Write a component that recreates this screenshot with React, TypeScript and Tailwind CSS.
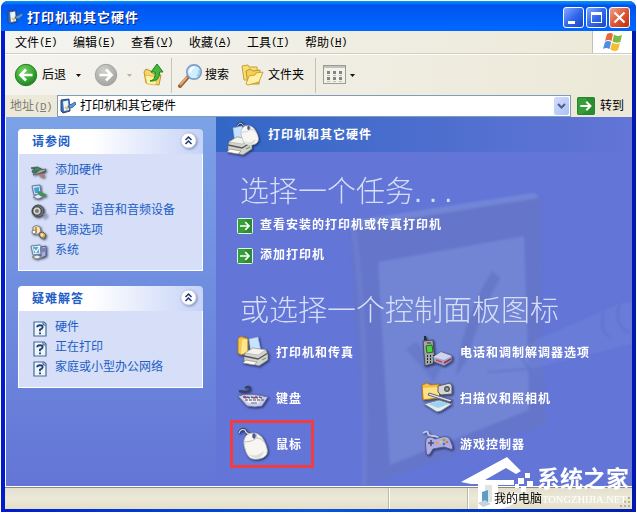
import React from 'react';

const UI = "font-['Liberation_Sans','Noto_Sans_CJK_SC',sans-serif]";

const Shadow = ({ children, w = 32, h = 32, box = '0 0 32 32' }: { children: React.ReactNode; w?: number; h?: number; box?: string }) => (
  <svg width={w} height={h} viewBox={box} className="shrink-0 overflow-visible drop-shadow-[1px_1px_1px_rgba(10,20,60,0.7)]">
    {children}
  </svg>
);

const WindowDoc = ({ size }: { size: number }) => (
  <svg width={size} height={size} viewBox="0 0 16 16" className="shrink-0">
    <path d="M1 2 L9 1 L10 13 L3 15 L1 13Z" fill="#3d6db5" stroke="#24467d" />
    <path d="M3 3.5 L8 2.5 L9 12 L4 13Z" fill="#e9f4fc" />
    <path d="M5 9 L7 11 L8.5 7" fill="none" stroke="#e1b35c" strokeWidth="1.3" />
    <path d="M8 9 Q9 6 12 6 L15 4 L16 6 L13 9 Q11 11 8 9Z" fill="#5a9ad5" stroke="#24558c" strokeWidth=".8" />
  </svg>
);

const Flag = () => (
  <svg width="20" height="20" viewBox="0 0 20 20">
    <path d="M4 2 Q7 0 10 2 L8.5 9 Q5.5 7 2 9Z" fill="#e9653a" />
    <path d="M11 2.5 Q14 5 19 3 L17.3 10 Q13 11.5 9.5 9.5Z" fill="#7dbb42" />
    <path d="M2 10 Q5 8 8.2 10 L6.5 17 Q3 15 0 17Z" fill="#4f8fe0" />
    <path d="M9.2 10.5 Q13 13 17 11 L15 18 Q11 20 7.3 17.5Z" fill="#f6bd32" />
  </svg>
);

const Round = ({ gray = false }: { gray?: boolean }) => (
  <svg width="24" height="24" viewBox="0 0 24 24" className="shrink-0">
    <defs>
      <radialGradient id={gray ? 'rg' : 'gg'} cx=".4" cy=".3" r=".75">
        <stop offset="0" stopColor={gray ? '#d0d0cd' : '#79d267'} />
        <stop offset=".55" stopColor={gray ? '#b6b6b3' : '#3dac34'} />
        <stop offset="1" stopColor={gray ? '#a0a09c' : '#1b7d1d'} />
      </radialGradient>
    </defs>
    <circle cx="12" cy="12" r="10.7" fill={gray ? 'url(#rg)' : 'url(#gg)'} stroke={gray ? '#a4a4a0' : '#268226'} />
    <path d={gray ? 'M5.5 12 H17 M12 6.5 L17.5 12 L12 17.5' : 'M18.5 12 H7 M12 6.5 L6.5 12 L12 17.5'} fill="none" stroke="#fff" strokeWidth="2.7" />
  </svg>
);

const GreenArrow = ({ size }: { size: number }) => (
  <svg width={size} height={size} viewBox="0 0 16 16" className="shrink-0">
    <rect x=".5" y=".5" width="15" height="15" rx="1" fill="#35a039" stroke={size > 16 ? '#288332' : '#e5f1e4'} />
    <path d="M8 1h7v14H4Q13 12 8 1Z" fill="#207f2a" opacity=".55" />
    <path d="M3 8h9M8.3 4.2 12 8l-3.7 3.8" fill="none" stroke="#fff" strokeWidth="1.7" />
  </svg>
);

const UpFolder = () => (
  <svg width="21" height="24" viewBox="0 0 21 24">
    <path d="M1 9 L3 6 L8 8 L9 10 L18 12 L16 22 L3 20Z" fill="#f6d667" stroke="#bd932d" />
    <path d="M2 12 L14 14 L13 22 L4 21Z" fill="#fff2a2" stroke="#d2aa45" strokeWidth=".7" />
    <path d="M7 18 Q13 17 12 9 L8 9 L14 1 L20 9 L16.5 9 Q17 19 7 18Z" fill="#45b83c" stroke="#20801f" />
  </svg>
);

const Search = () => (
  <svg width="25" height="25" viewBox="0 0 25 25">
    <path d="M2 23 L10 14" stroke="#9a6335" strokeWidth="4" strokeLinecap="round" />
    <path d="M2 22 L9 14" stroke="#e0aa78" strokeWidth="2" />
    <circle cx="16" cy="9" r="7.2" fill="#cfeeff" stroke="#7d9ec9" strokeWidth="1.7" />
    <path d="M11 9 Q12 3 18 4 Q14 5 13 10Z" fill="#fff" />
    <path d="M19 13 Q22 11 21 7" stroke="#95cff4" strokeWidth="2" fill="none" />
  </svg>
);

const Folders = () => (
  <svg width="23" height="22" viewBox="0 0 23 22">
    <path d="M1 2 L7 1 L8 3 L16 3 L17 16 L3 16Z" fill="#f8dd72" stroke="#c6a03b" />
    <path d="M5 7 L9 5 L12 7 L19 6 L18 20 L7 20Z" fill="#f4cf55" stroke="#bd9331" />
    <path d="M5 20 L8 12 L14 11 L15 9 L22 8 L18 18 L7 21Z" fill="#fff19f" stroke="#c9a33d" />
  </svg>
);

const Views = () => (
  <svg width="24" height="20" viewBox="0 0 24 20">
    <rect x=".5" y=".5" width="22" height="18" fill="#f3f2ea" stroke="#9b9b95" />
    <path d="M1 2 H22" stroke="#c2c2bc" strokeWidth="2" />
    {[4, 10, 16].map((x) => [6, 12].map((y) => (
      <g key={`${x}-${y}`}>
        <rect x={x} y={y} width="3" height="3" fill="#85857f" />
        <rect x={x} y={y + 4} width="3" height="1" fill="#bdbdb7" />
      </g>
    )))}
  </svg>
);

const Caret = ({ faded = false }: { faded?: boolean }) => (
  <svg width="5" height="3" viewBox="0 0 5 3" className="shrink-0"><path d="M0 0h5L2.5 3Z" fill={faded ? '#b4b3a9' : '#111'} /></svg>
);

const MouseShape = () => (
  <>
    <path d="M2 5 Q4 0 8 2 Q9 6 14 6" fill="none" stroke="#32425c" strokeWidth="2.6" />
    <path d="M2 5 Q4 0 8 2 Q9 6 14 6" fill="none" stroke="#dde2ea" strokeWidth="1.1" />
    <path d="M7 12 Q9 4 18 5 Q25 6 29 17 Q34 29 22 31 Q12 33 9 24 Q6 17 7 12Z" fill="#f7f6f1" stroke="#a9abb0" strokeWidth=".8" />
    <path d="M8 14 Q15 14 20 10 L19 5 M20 10 Q24 10 27 14" fill="none" stroke="#c0c3ca" />
    <path d="M12 25 Q17 31 27 23 Q25 31 18 30 Q13 29 12 25Z" fill="#dedcd7" />
    <ellipse cx="17" cy="8" rx="1.8" ry="2.8" fill="#4e5790" />
  </>
);

const Printer = () => (
  <>
    <path d="M12 3 L21 1 L24 15 L14 18Z" fill="#c8e3ff" stroke="#91b1d8" strokeWidth=".7" />
    <path d="M8 17 L16 12 L29 14 L31 18 V24 L22 30 L7 26 V20Z" fill="#d4d2cc" stroke="#777a80" strokeWidth=".8" />
    <path d="M8 17 L16 12 L29 14 L21 19Z" fill="#f3f2ed" stroke="#aaa9a5" strokeWidth=".6" />
    <path d="M7 20 L21 23 L31 17" fill="none" stroke="#55575b" strokeWidth="1.3" />
    <path d="M9 24 L20 26 L17 29 L6 27Z" fill="#fffef3" stroke="#8d8b86" strokeWidth=".7" />
    <path d="M25 24l4-2" stroke="#68ad5c" strokeWidth="1.3" />
  </>
);

const HeaderIcon = () => (
  <Shadow w={34} h={32} box="0 0 34 32">
    <g transform="translate(-6 2)"><Printer /></g>
    <g transform="translate(9 -1) scale(.74)"><MouseShape /></g>
  </Shadow>
);

const ControlIcon = ({ kind }: { kind: string }) => (
  <Shadow>
    {kind === 'printer' && <>
      <path d="M1 3 Q2 0 6 1 L11 3 V17 L4 19 L1 17Z" fill="#f4c850" stroke="#b58322" />
      <path d="M5 4 L10 3 V16 L4 18Z" fill="#ffe693" /><Printer />
    </>}
    {kind === 'keyboard' && <>
      <path d="M2 9 Q13 11 13 7 Q13 3 8 6" fill="none" stroke="#34425b" strokeWidth="2" />
      <path d="M1 14 Q12 10 31 15 L25 24 Q18 26 10 24Z" fill="#cacbe9" stroke="#6e719b" />
      <path d="M4 15 L25 15 L21 22 L11 21Z" fill="#eeedf4" />
      {[6, 10, 14, 18, 22].map((x) => <g key={x}><path d={`M${x} 15 l3 1`} stroke="#5e638b" strokeWidth="1.5" /><path d={`M${x + 2} 18 l3 0`} stroke="#73809d" strokeWidth="1.5" /></g>)}
      <path d="M7 14l3 2M20 15l-3 1" stroke="#a64061" strokeWidth="1.5" /><path d="M14 21h6" stroke="#5f668f" />
    </>}
    {kind === 'mouse' && <MouseShape />}
    {kind === 'phone' && <>
      <path d="M3 0 h2 l1 5 h-3Z" fill="#252c35" /><path d="M2 5 L12 4 L14 27 L4 30Z" fill="#a1a5a6" stroke="#444b50" />
      <path d="M5 10 L11 9 L12 16 L6 17Z" fill="#4bd538" stroke="#28632a" /><path d="M6 7h4" stroke="#333" />
      {[20, 23, 26].map((y) => <path key={y} d={`M6 ${y}h1m2 0h1m2 0h1`} stroke="#202a2f" strokeWidth="2" />)}
      <path d="M12 21 L20 16 L31 20 V25 L23 30 L13 26Z" fill="#9ea3cc" stroke="#555b7b" /><path d="M12 21 L20 16 L31 20 L23 24Z" fill="#d0d3ee" />
      <path d="M23 27l7-4" stroke="#9b3543" strokeWidth="2" /><path d="M15 24l6 2" stroke="#d64b48" strokeWidth="1.5" />
    </>}
    {kind === 'scanner' && <>
      <path d="M1 3 L6 1 L10 3 L18 2 V16 L2 18Z" fill="#f3c04a" stroke="#b17e20" />
      <path d="M2 6 L18 5 V15 L3 17Z" fill="#ffe184" />
      <path d="M17 4 L29 1 L31 4 V12 L20 13 L17 10Z" fill="#d6d4cf" stroke="#5b5c60" />
      <circle cx="26" cy="7" r="3.6" fill="#4d555d" stroke="#e5e5df" /><circle cx="26" cy="7" r="1.5" fill="#91a8b4" />
      <path d="M8 11 L31 18 L29 20 L7 13Z" fill="#dedeed" stroke="#60677b" />
      <path d="M3 22 L18 18 L31 22 L20 29 L16 30Z" fill="#e8eaf0" stroke="#717b94" /><path d="M7 22 L18 19 L28 22 L17 26Z" fill="#9bd3ec" />
    </>}
    {kind === 'game' && <>
      <path d="M2 5 Q7 2 7 5 Q7 8 12 8 Q17 8 18 11" fill="none" stroke="#c2c5e6" strokeWidth="2" />
      <path d="M5 11 Q9 7 14 11 L21 9 Q28 7 30 14 Q34 23 29 21 L23 19 L12 21 L9 26 Q5 29 5 22 Q4 15 5 11Z" fill="#aeaee2" stroke="#5c5b8b" />
      <path d="M7 15h6m-3-3v6" stroke="#4a507d" strokeWidth="1.6" /><circle cx="23" cy="12" r="1.3" fill="#52bf40" /><circle cx="26" cy="14" r="1.3" fill="#ec673a" /><circle cx="20" cy="14" r="1.3" fill="#edc845" /><circle cx="23" cy="16" r="1.3" fill="#3c71d8" /><circle cx="16" cy="15" r="1.2" fill="#ec9a4a" />
    </>}
  </Shadow>
);

const SmallIcon = ({ kind }: { kind: string }) => (
  <Shadow w={16} h={16} box="0 0 16 16">
    {kind === 'hardware' && <>
      <path d="M0 4 L6 3 L15 7 L12 9 L6 7 L2 9 L1 7 L4 5Z" fill="#438560" stroke="#385548" strokeWidth=".8" />
      <path d="M2 11 L9 6 L15 5 L14 7 L9 9Z" fill="#a7b3ad" stroke="#505e5a" strokeWidth=".8" /><path d="M8 10 L14 11 L13 14 L8 12Z" fill="#c97954" />
    </>}
    {kind === 'display' && <>
      <path d="M1 2 L9 1 L10 10 L3 11Z" fill="#cae4f5" stroke="#617b9b" /><path d="M3 4 L8 3 L8 9 L4 9Z" fill="#479fdc" />
      <path d="M2 13 L7 10 L12 13 L7 15Z" fill="#e4e8ef" stroke="#7b8296" /><path d="M7 8 L15 12" stroke="#3d9752" strokeWidth="3" />
    </>}
    {kind === 'sound' && <>
      <circle cx="7" cy="7" r="6" fill="#6f7275" stroke="#474a4f" /><circle cx="6" cy="7" r="4.2" fill="#d7d7d2" stroke="#333" /><circle cx="6" cy="7" r="2" fill="#74787b" />
      <path d="M12 11q2 0 2-2M12 14q4 0 4-4" stroke="#9a9fc4" fill="none" />
    </>}
    {kind === 'power' && <>
      <path d="M2 3 Q5 0 9 3 L10 9 Q5 12 2 8Z" fill="#f7e5bc" stroke="#78828a" /><path d="M5 3v6" stroke="#dd9139" strokeWidth="2" />
      <circle cx="3" cy="8" r="2" fill="#fff" stroke="#777" /><path d="M8 9 L12 8 L15 11 L13 15 L9 13Z" fill="#d6a94d" stroke="#665b50" /><circle cx="11" cy="11" r="1.4" fill="#f3eabd" />
    </>}
    {kind === 'system' && <>
      <path d="M10 3 L15 2 V12 L10 14Z" fill="#a7addc" stroke="#555e92" /><path d="M11 5h3m-3 2h3" stroke="#505989" />
      <path d="M0 2 L9 1 L10 10 L2 11Z" fill="#e1edf6" stroke="#66839b" /><path d="M2 3 L8 3 L8 9 L3 9Z" fill="#51a8db" /><path d="M3 5l2 3 4-6" stroke="#fff" strokeWidth="1.3" fill="none" />
      <path d="M1 13L6 11 L11 13 L6 15Z" fill="#eee" stroke="#888" />
    </>}
  </Shadow>
);

const HelpIcon = () => (
  <svg width="14" height="16" viewBox="0 0 14 16" className="shrink-0">
    <path d="M1 1h10l2 2v12H1Z" fill="#eef6fc" stroke="#456b94" strokeWidth="1.2" /><path d="M10 1v3h3" fill="#a8c1dd" stroke="#456b94" />
    <path d="M4.2 6.2Q4.3 4.2 7 4.2T9.6 6.3Q9.6 7.5 7 8.6V10.3M7 11.5v1.8" fill="none" stroke="#1d3f77" strokeWidth="1.9" />
  </svg>
);

const Panel = ({ title, className, children }: { title: string; className: string; children: React.ReactNode }) => (
  <section className={`flex w-[185px] flex-col ${className}`}>
    <header className="flex h-[25px] shrink-0 items-center justify-between rounded-t-[4px] bg-gradient-to-r from-white from-40% to-[#c6d3f7] pr-[6px] pl-[14px]">
      <h2 className="pt-px text-[12px] leading-none font-bold tracking-[1px] text-[#215dc6]">{title}</h2>
      <svg width="17" height="17" viewBox="0 0 17 17" className="-mt-[3px] overflow-visible drop-shadow-[1px_1px_1px_rgba(70,90,150,0.55)]">
        <circle cx="8.5" cy="8.5" r="7.6" fill="#fff" stroke="#c0c9e2" /><path d="m5.5 8 3-3 3 3m-6 4 3-3 3 3" fill="none" stroke="#20366c" strokeWidth="1.5" />
      </svg>
    </header>
    <div className="flex-1 border border-t-0 border-white bg-[#d6dff7] pl-[12px]">{children}</div>
  </section>
);

const MenuItem = ({ text, letter }: { text: string; letter: string }) => (
  <span className="flex w-[58px] items-center pt-px">{text}<span className="font-['Liberation_Mono',monospace] text-[11px] tracking-[-0.6px]">(<u className="underline-offset-1">{letter}</u>)</span></span>
);

const Art = () => (
  <svg width="416" height="334" viewBox="0 0 416 334" className="absolute inset-0">
    <g className="blur-[1px]">
      <path d="M134 70 L316 43 Q325 41 325 50 L326 177 Q327 228 331 273 L288 286 L147 334 L150 300 Q139 180 134 70Z" fill="#6a7aae" opacity=".3" />
      <path d="M134 69 L315 41 Q323 41 322 46 L134 76Z" fill="#8da4e7" opacity=".35" />
      <path d="M162 110 L308 84 L312 200 L313 258 L174 313Z" fill="#8a9ce6" opacity=".38" />
      <path d="M276 119 L284 126 Q262 165 252 206 L240 224 L246 190 Q257 149 276 119Z" fill="#5266b4" opacity=".38" />
      <path d="M190 197 L200 190 L226 214 L218 230Z" fill="#5266b4" opacity=".3" />
      <path d="M272 220 L320 188 L402 152 L416 150 L416 192 L311 218Z" fill="#7388de" opacity=".38" />
      <path d="M272 220 L313 217 L304 203 M388 160 Q382 178 395 186 M404 152 Q396 172 414 181" fill="none" stroke="#5369bd" strokeWidth="2.5" opacity=".35" />
      <path d="M137 75 Q152 170 148 334" fill="none" stroke="#8498df" strokeWidth="5" opacity=".22" />
    </g>
  </svg>
);

const Control = ({ kind, label, boxed = false }: { kind: string; label: string; boxed?: boolean }) => (
  <div className={`flex items-center gap-[7px] ${boxed ? '-ml-[7px] h-[48px] w-[84px] border-[3px] border-[#ef3d43] pl-[4px]' : 'h-[46px]'}`}>
    <ControlIcon kind={kind} /><span className="pt-px text-[12px] font-bold tracking-[1px] whitespace-nowrap text-white">{label}</span>
  </div>
);

const Watermark = () => (
  <div className="absolute top-[456px] left-[460px] h-[54px] w-[172px]">
    <svg width="80" height="54" viewBox="0 0 80 54" className="absolute top-0 left-0">
      <path d="M1 26 L47 1 L61 15 L56 18 L46 12 L25 24 H54 V29 H38 V47 Q49 46 52 36 L60 38 Q55 51 39 53 H18 V28 H11Z" fill="white" />
      <path d="M25 29H32V46H25Z" fill="#dfe5df" />
      <path d="M58 22h6v6h-6ZM65 17h5v5h-5ZM67 25h6v6h-6ZM61 31h5v5h-5ZM55 28h4v4h-4Z" fill="white" />
      <path d="M22 36 L28 34 V46 L22 48Z" fill="#5e9bc8" /><path d="M18 47 L25 44 L31 48 L23 51Z" fill="#c7d3da" />
    </svg>
    <span className="absolute top-[10px] left-[77px] text-[23px] leading-[26px] font-bold whitespace-nowrap text-white">系统之家</span>
    <span className="absolute top-[38px] left-[82px] font-['Liberation_Serif',serif] text-[10.5px] leading-[12px] whitespace-nowrap text-white">TONGZHIJIA.NET</span>
    <span className="absolute top-[36px] left-[34px] w-[48px] text-[12px] leading-[14px] whitespace-nowrap text-black">我的电脑</span>
  </div>
);

export default function App() {
  return (
    <main className={`relative h-[513px] w-[637px] overflow-hidden bg-white p-px text-[12px] leading-none text-black ${UI}`}>
      <div className="flex h-[511px] w-[635px] flex-col overflow-hidden rounded-t-[7px] bg-[#0831d9] bg-gradient-to-r from-[#0019cf] via-[#0855dd] to-[#0019b0]">
        <header className="flex h-[30px] shrink-0 items-center bg-gradient-to-b from-[#0997ff] via-[#0053ee] via-15% to-[#0066ff] to-90% pt-[2px] pr-[6px] pl-[6px]">
          <WindowDoc size={16} />
          <h1 className="mt-px ml-[4px] text-[13px] leading-none font-bold tracking-[1px] text-white [text-shadow:1px_1px_#0a1f80]">打印机和其它硬件</h1>
          <div className="ml-auto flex gap-[2px]">
            {['min', 'max', 'close'].map((b) => (
              <button key={b} className={`flex h-[21px] w-[21px] items-center justify-center rounded-[3px] border border-white bg-gradient-to-br ${b === 'close' ? 'from-[#f0a088] via-[#df5735] to-[#bb310e]' : 'from-[#85a8ff] via-[#3169ec] to-[#1845c8]'}`}>
                <svg width="19" height="19" viewBox="0 0 19 19">
                  {b === 'min' && <path d="M4 13h7v3H4Z" fill="#fff" />}
                  {b === 'max' && <path d="M4 4h11v11H4ZM5 7v7h9V7Z" fill="#fff" fillRule="evenodd" />}
                  {b === 'close' && <path d="m4.5 4.5 10 10m0-10-10 10" stroke="#fff" strokeWidth="2.2" />}
                </svg>
              </button>
            ))}
          </div>
        </header>

        <div className="ml-[4px] flex h-[478px] w-[627px] flex-col bg-[#ece9d8]">
          <nav className="flex h-[23px] shrink-0 border-b border-[#d1cebd] bg-gradient-to-r from-[#f4f4f1] to-[#ece9d8] pl-[10px]">
            <MenuItem text="文件" letter="F" /><MenuItem text="编辑" letter="E" /><MenuItem text="查看" letter="V" /><MenuItem text="收藏" letter="A" /><MenuItem text="工具" letter="T" /><MenuItem text="帮助" letter="H" />
            <div className="ml-auto flex w-[40px] items-center justify-center border-l border-[#c6c3b4] bg-white"><Flag /></div>
          </nav>

          <div className="flex h-[41px] shrink-0 items-center border-t border-white bg-gradient-to-r from-[#f4f3ee] to-[#ece9d8] pl-[9px]">
            <Round /><span className="ml-[4px] w-[24px]">后退</span><span className="ml-[10px]"><Caret /></span>
            <span className="ml-[13px]"><Round gray /></span><span className="ml-[9px]"><Caret faded /></span>
            <span className="ml-[11px]"><UpFolder /></span><span className="ml-[7px] h-[35px] w-px bg-[#c9c6b7]" />
            <span className="ml-[6px]"><Search /></span><span className="ml-[2px] w-[36px]">搜索</span>
            <Folders /><span className="ml-[4px] w-[36px]">文件夹</span>
            <span className="ml-[11px] h-[35px] w-px bg-[#c5c2b3]" /><span className="ml-[7px]"><Views /></span><span className="ml-[3px]"><Caret /></span>
          </div>

          <div className="flex h-[22px] shrink-0 items-center">
            <span className="w-[52px] pl-[5px] text-[#7d7d74]">地址<span className="font-['Liberation_Mono',monospace] text-[11px] tracking-[-0.6px]">(<u>D</u>)</span></span>
            <div className="flex h-[22px] w-[514px] items-center border border-[#7f9db9] bg-white pr-px pl-[2px]">
              <WindowDoc size={16} /><span className="ml-[4px]">打印机和其它硬件</span>
              <span className="ml-auto flex h-[18px] w-[15px] items-center justify-center rounded-[2px] bg-gradient-to-br from-[#d3ddff] to-[#abc0f7]"><svg width="9" height="6" viewBox="0 0 9 6"><path d="m1 1 3.5 3.5L8 1" fill="none" stroke="#4d6185" strokeWidth="2" /></svg></span>
            </div>
            <span className="ml-[6px]"><GreenArrow size={18} /></span><span className="ml-[5px]">转到</span>
          </div>

          <div className="flex h-[370px] shrink-0 border-b border-l border-white">
            <aside className="w-[210px] shrink-0 bg-gradient-to-b from-[#7ba2e7] to-[#6375d6] pt-[12px] pl-[12px]">
              <Panel title="请参阅" className="h-[142px]">
                <ul className="flex flex-col pt-[6px]">
                  {[['hardware', '添加硬件'], ['display', '显示'], ['sound', '声音、语音和音频设备'], ['power', '电源选项'], ['system', '系统']].map(([k, t]) => (
                    <li key={k} className="flex h-[20px] items-center"><span className="mt-[4px]"><SmallIcon kind={k} /></span><span className="ml-[8px] text-[#215dc6]">{t}</span></li>
                  ))}
                </ul>
              </Panel>
              <Panel title="疑难解答" className="mt-[15px] h-[102px]">
                <ul className="flex flex-col pt-[6px]">
                  {['硬件', '正在打印', '家庭或小型办公网络'].map((t) => (
                    <li key={t} className="flex h-[20px] items-center pl-[2px]"><span className="mt-[4px]"><HelpIcon /></span><span className="ml-[8px] text-[#215dc6]">{t}</span></li>
                  ))}
                </ul>
              </Panel>
            </aside>

            <section className="flex flex-1 flex-col bg-[#6375d6]">
              <header className="flex h-[35px] shrink-0 items-center bg-gradient-to-r from-[#3267c6] to-[#6375d6] pl-[11px]">
                <span className="mt-[9px]"><HeaderIcon /></span><h2 className="ml-[7px] text-[12px] font-bold tracking-[1px] text-white">打印机和其它硬件</h2>
              </header>
              <div className="relative h-[334px] overflow-hidden">
                <Art />
                <div className="relative flex flex-col pl-[21px]">
                  <h3 className="mt-[26px] ml-[3px] h-[30px] text-[29px] leading-[29px] font-light whitespace-nowrap text-[#d6dff7]">选择一个任务<span className="tracking-[7px]">...</span></h3>
                  <div className="mt-[7px] flex h-[20px] items-center gap-[7px]"><span className="pt-[2px]"><GreenArrow size={16} /></span><span className="font-bold tracking-[1px] text-white">查看安装的打印机或传真打印机</span></div>
                  <div className="mt-[10px] flex h-[20px] items-center gap-[7px]"><span className="pt-[2px]"><GreenArrow size={16} /></span><span className="font-bold tracking-[1px] text-white">添加打印机</span></div>
                  <h3 className="mt-[32px] ml-[3px] h-[32px] text-[29px] leading-[29px] font-light whitespace-nowrap text-[#d6dff7]">或选择一个控制面板图标</h3>
                  <div className="grid grid-cols-[184px_1fr] grid-rows-[46px_46px_46px] items-center">
                    <Control kind="printer" label="打印机和传真" /><Control kind="phone" label="电话和调制解调器选项" />
                    <Control kind="keyboard" label="键盘" /><Control kind="scanner" label="扫描仪和照相机" />
                    <Control kind="mouse" label="鼠标" boxed /><Control kind="game" label="游戏控制器" />
                  </div>
                </div>
              </div>
            </section>
          </div>

          <footer className="flex h-[22px] shrink-0 border-t border-[#8d8b80] bg-gradient-to-b from-[#e2dfd0] via-[#ece9d8] to-[#e5dfc8]">
            <span className="w-[384px] border-r border-[#bdb9a6]" /><span className="w-[79px] border-r border-l border-l-white border-r-[#bdb9a6]" /><span className="flex-1 border-l border-white" />
            <svg width="13" height="20" viewBox="0 0 13 20"><path d="M9 9h2v2H9ZM5 13h2v2H5ZM9 13h2v2H9ZM1 17h2v2H1ZM5 17h2v2H5ZM9 17h2v2H9Z" fill="#b5b19d" /></svg>
          </footer>
        </div>
      </div>
      <Watermark />
    </main>
  );
}
